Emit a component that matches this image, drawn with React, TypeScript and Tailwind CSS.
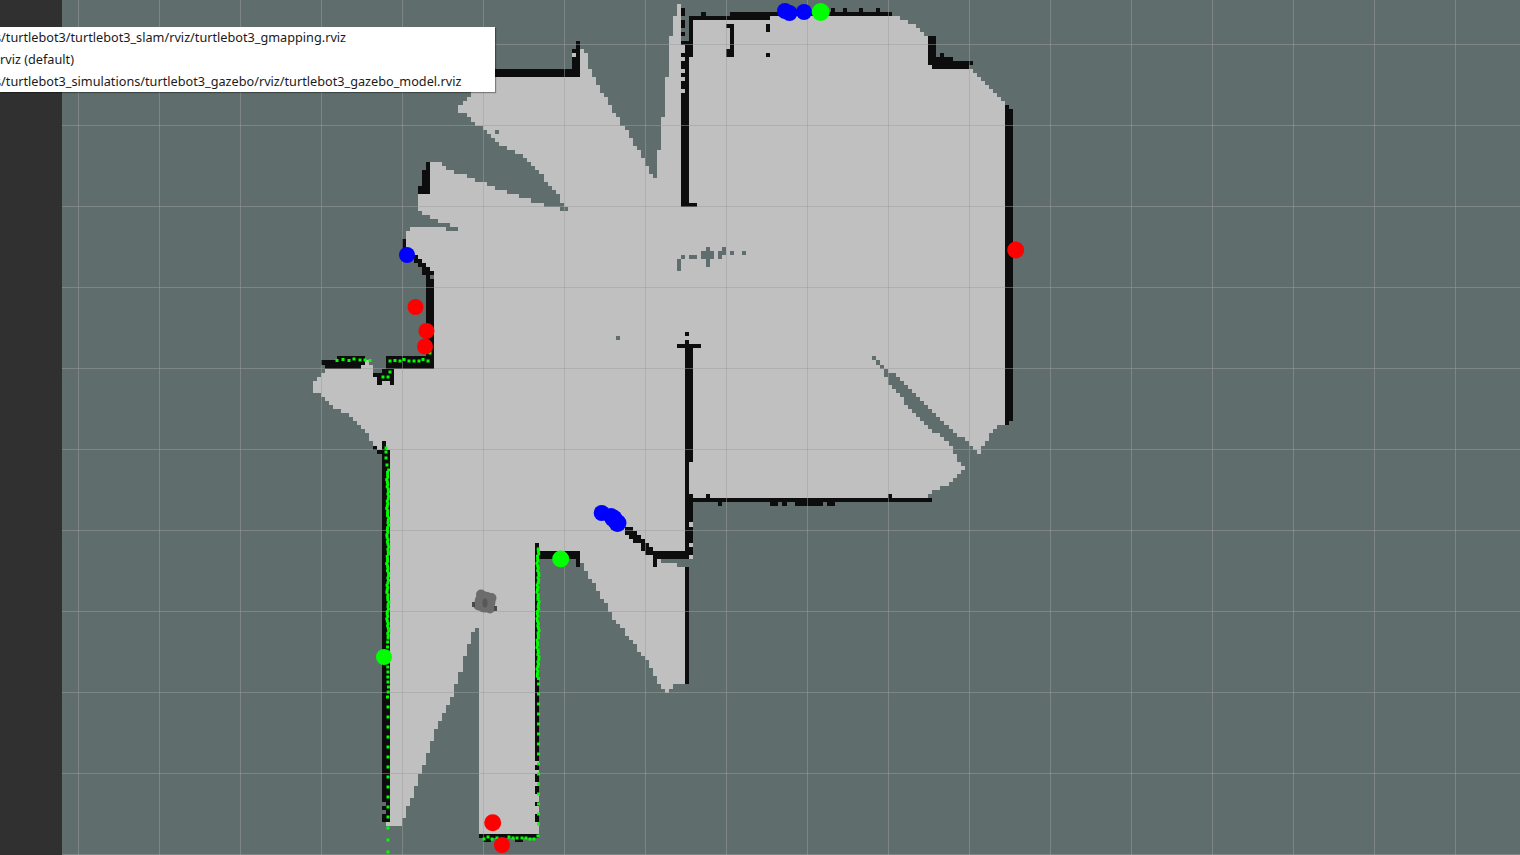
type Rect = [number, number, number, number];

const CELL = 4.05;
const OX = 0.8;
const snapX = (v: number) => Math.round((v - OX) / CELL) * CELL + OX;
const snapY = (v: number) => Math.round(v / CELL) * CELL;

// free space outline, clockwise from the spike at the top
const outline: [number, number][] = [
  [677, 4], [681, 4], [681, 41], [689, 41], [689, 16], [892, 16], [903, 20], [912, 24], [920, 32], [928, 37],
  [928, 65], [968, 69], [1005, 105], [1005, 425], [1001, 425], [997, 429], [989, 437], [985, 445], [981, 450],
  [981, 454], [977, 454], [973, 445], [968, 441], [957, 432], [943, 420], [920, 397], [916, 393], [912, 389],
  [908, 385], [904, 381], [900, 377], [896, 372], [888, 368], [884, 364], [880, 360], [876, 356], [872, 356],
  [872, 360], [876, 364], [880, 368], [884, 372], [888, 385], [920, 420], [948, 445], [953, 452], [962, 465],
  [965, 468], [962, 472], [953, 480], [943, 485], [932, 495], [928, 498], [693, 498], [693, 559], [661, 559],
  [661, 563], [677, 563], [677, 567], [689, 567], [689, 684], [682, 684], [673, 688], [665, 692], [662, 685],
  [645, 655], [617, 620], [593, 580], [583, 567], [580, 555], [540, 555], [540, 835], [479, 835], [479, 628],
  [475, 628], [467, 652], [455, 692], [442, 717], [430, 748], [418, 782], [406, 813], [402, 825], [393, 825],
  [387, 822], [387, 450], [378, 447], [374, 440], [365, 430], [353, 417], [341, 410], [329, 405], [325, 397],
  [321, 393], [313, 392], [313, 380], [317, 377], [321, 373], [325, 368], [361, 368], [361, 364], [366, 364],
  [366, 360], [370, 360], [370, 364], [374, 364], [374, 373], [386, 373],
  [386, 368], [434, 368], [434, 280], [430, 270], [406, 246], [406, 232], [410, 228], [447, 228], [447, 232],
  [459, 232], [459, 228], [447, 222], [430, 215], [422, 211], [418, 207], [418, 195], [430, 162], [438, 162],
  [442, 166], [458, 173], [478, 182], [510, 193], [523, 198], [548, 206], [560, 207], [560, 211], [568, 211],
  [568, 207], [563, 203], [556, 190], [548, 182], [540, 170], [527, 158], [515, 150], [503, 145], [490, 133],
  [482, 125], [475, 120], [467, 113], [459, 109], [459, 105], [463, 103], [467, 97], [472, 93], [472, 80],
  [496, 76], [578, 73], [578, 49], [583, 50], [592, 78], [617, 118], [637, 150], [645, 165], [653, 178],
  [657, 178], [657, 150], [661, 150], [661, 118], [665, 118], [665, 77], [669, 77], [669, 37], [673, 37],
  [673, 16], [677, 16],
];

const walls: Rect[] = [
  // top room
  [681, 8, 4, 8], [681, 20, 4, 8], [681, 33, 4, 4], [681, 41, 12, 4], [689, 16, 4, 41], [685, 45, 8, 12], [681, 53, 12, 4],
  [685, 57, 4, 150], [681, 61, 4, 8], [681, 73, 4, 4], [681, 81, 4, 8], [681, 93, 8, 114], [681, 203, 16, 4],
  [689, 16, 81, 4], [730, 12, 40, 8], [702, 12, 4, 4], [770, 12, 122, 4], [831, 8, 4, 4], [843, 8, 4, 4], [859, 8, 4, 4], [877, 8, 4, 4],
  [726, 24, 8, 4], [730, 24, 4, 33], [726, 49, 8, 8], [766, 24, 4, 9], [766, 53, 4, 4],
  [928, 37, 8, 28], [936, 57, 17, 8], [940, 53, 4, 4], [932, 61, 36, 8], [968, 61, 4, 4],
  [1005, 105, 4, 320], [1009, 109, 4, 312],
  // middle partition and lower wall
  [685, 332, 4, 4], [685, 340, 4, 4], [677, 344, 25, 4], [685, 348, 8, 114], [685, 462, 4, 32], [685, 494, 8, 61],
  [693, 498, 239, 4], [706, 494, 4, 4], [888, 494, 4, 4], [718, 502, 4, 4], [770, 502, 8, 4], [782, 502, 4, 4], [795, 502, 11, 4], [808, 502, 15, 4], [827, 502, 8, 4],
  // diagonal by the door
  [625, 526, 8, 4], [625, 530, 12, 5], [629, 535, 12, 4], [633, 539, 12, 4], [641, 543, 8, 8], [645, 547, 8, 8], [653, 551, 36, 8], [653, 555, 4, 12], [685, 567, 4, 117],
  [536, 544, 4, 187], [536, 731, 4, 29], [536, 765, 4, 3], [536, 773, 4, 9], [536, 787, 4, 6], [536, 802, 4, 4], [536, 814, 4, 8],
  [540, 551, 40, 8], [576, 555, 4, 12],
  // bottom of the corridor
  [479, 834, 61, 4], [483, 838, 8, 4], [515, 838, 8, 4],
  // left wall
  [382, 441, 4, 9], [374, 445, 4, 4], [378, 450, 12, 4], [382, 450, 8, 352], [386, 802, 4, 8], [382, 806, 8, 4], [386, 810, 4, 4], [382, 814, 8, 8],
  // left stubs
  [337, 356, 29, 4], [325, 360, 41, 4], [325, 364, 36, 4], [321, 360, 4, 4], [386, 356, 48, 12], [374, 373, 20, 4], [382, 369, 12, 4], [378, 377, 16, 4], [378, 381, 4, 4], [390, 381, 4, 4],
  [426, 279, 8, 89], [426, 275, 4, 4], [422, 271, 12, 4], [422, 267, 8, 4], [418, 263, 8, 4], [414, 259, 8, 4], [410, 255, 8, 4], [402, 239, 4, 14],
  // upper left
  [426, 162, 4, 8], [422, 170, 8, 16], [418, 186, 12, 8],
  [496, 69, 81, 8], [572, 49, 8, 28], [576, 41, 4, 8],
];

const holes: Rect[] = [[689, 522, 4, 4], [689, 543, 4, 4], [572, 53, 4, 4]];

const specks: Rect[] = [
  [677, 259, 4, 12], [681, 255, 4, 4], [689, 255, 8, 4], [702, 251, 12, 8], [706, 247, 4, 20], [718, 251, 4, 8], [722, 247, 4, 8],
  [730, 251, 4, 4], [742, 251, 4, 4], [618, 336, 4, 4], [495, 130, 4, 4],
];

const rectPath = ([x, y, w, h]: Rect) => {
  const x0 = snapX(x), y0 = snapY(y), x1 = snapX(x + w), y1 = snapY(y + h);
  return `M${x0} ${y0}H${x1}V${y1}H${x0}Z`;
};

// turns the slanted edges of the outline into map cells
const stairPath = (pts: [number, number][]) => {
  const snapped = pts.map(([x, y]) => [snapX(x), snapY(y)]);
  let d = `M${snapped[0][0]} ${snapped[0][1]}`;
  snapped.forEach((p, i) => {
    const q = snapped[(i + 1) % snapped.length];
    const dx = q[0] - p[0], dy = q[1] - p[1];
    const n = Math.max(1, Math.round(Math.max(Math.abs(dx), Math.abs(dy)) / CELL));
    if (dx === 0 || dy === 0) {
      d += `L${q[0]} ${q[1]}`;
      return;
    }
    for (let k = 1; k <= n; k++) {
      d += `H${snapX(p[0] + (dx * k) / n)}V${snapY(p[1] + (dy * k) / n)}`;
    }
  });
  return d + "Z";
};

const scan: [number, number][] = [
  [337, 360.5], [343, 359.5], [349, 360.5], [354, 359], [360, 360], [365, 360], [370, 360.5],
  [390, 361], [395, 360.5], [400, 361], [404, 359.5], [409, 361], [414, 361], [419, 361], [423, 359.5], [428, 361], [430, 353],
  [390, 372], [383, 377], [388, 377], [386, 448], [386, 452], [386, 458], [387, 465],
  [388, 828], [388, 840], [388, 852],
  [484, 839], [488, 837], [492, 839], [497, 838], [509, 837], [513, 838], [517, 838], [522, 838], [526, 838], [530, 839], [534, 839], [538, 836],
];
const wobble = (y: number) => Math.sin(y * 0.9) * 0.5 + Math.sin(y * 0.23 + 1) * 0.6;
for (let y = 470; y < 640; y += 2.4) scan.push([387.8 + wobble(y), y]);
for (let y = 642; y < 700; y += 5) scan.push([388 + wobble(y) * 0.5, y]);
for (let y = 707; y < 822; y += 10) scan.push([388, y]);
for (let y = 549; y < 680; y += 2.4) scan.push([538 + wobble(y), y]);
for (let y = 684; y < 830; y += 10) scan.push([538.5, y]);

const blobs: [number, number, number, string][] = [
  [407, 255, 8, "#0000ff"], [601.7, 513, 8, "#0000ff"], [611, 516, 8, "#0000ff"], [613.5, 518.5, 9, "#0000ff"], [617.5, 523, 9, "#0000ff"],
  [785, 11, 8, "#0000ff"], [789.5, 13, 8, "#0000ff"], [804, 12, 8, "#0000ff"], [820.7, 12, 9, "#00ff00"],
  [1015.7, 250, 8.5, "#ff0000"], [415.5, 307, 8, "#ff0000"], [426.5, 331, 8, "#ff0000"], [425, 346.5, 8, "#ff0000"],
  [384, 657, 8, "#00ff00"], [560.7, 559, 8.5, "#00ff00"], [492.7, 822.7, 8.5, "#ff0000"], [502, 845, 8, "#ff0000"],
];

const gridX = Array.from({ length: 18 }, (_, i) => 78.5 + i * 81);
const gridY = Array.from({ length: 11 }, (_, i) => 44.5 + i * 81);

function MapView() {
  return (
    <svg viewBox="62 0 1458 855" className="block h-full w-full">
      <g shapeRendering="crispEdges">
        <path d={stairPath(outline)} fill="#c0c0c0" />
        <path d={specks.map(rectPath).join("")} fill="#5f6d6c" />
        <path d={walls.map(rectPath).join("")} fill="#0d0d0d" />
        <path d={holes.map(rectPath).join("")} fill="#c0c0c0" />
        {gridX.map((x) => (
          <line key={x} x1={x} x2={x} y1={0} y2={855} stroke="#9b9d9d" strokeOpacity={0.5} />
        ))}
        {gridY.map((y) => (
          <line key={y} x1={62} x2={1520} y1={y} y2={y} stroke="#9b9d9d" strokeOpacity={0.5} />
        ))}
      </g>
      <g fill="#6c6c6c">
        <circle cx={481} cy={594.5} r={5} />
        <circle cx={491.5} cy={598} r={5} />
        <circle cx={490} cy={608.5} r={5} />
        <circle cx={478.5} cy={605.5} r={5} />
        <circle cx={485} cy={602} r={10.5} />
        <rect x={472} y={602} width={3} height={5} fill="#4a4a4a" />
        <rect x={494} y={606} width={3} height={5} fill="#4a4a4a" />
        <ellipse cx={485} cy={603} rx={2.5} ry={4.5} fill="#585858" />
      </g>
      {scan.map(([x, y], i) => (
        <rect key={i} x={x - 1.5} y={y - 1.5} width={3} height={3} fill="#00ff00" />
      ))}
      {blobs.map(([x, y, r, c], i) => (
        <circle key={i} cx={x} cy={y} r={r} fill={c} />
      ))}
    </svg>
  );
}

const recent = [
  "s/turtlebot3/turtlebot3_slam/rviz/turtlebot3_gmapping.rviz",
  "rviz (default)",
  "s/turtlebot3_simulations/turtlebot3_gazebo/rviz/turtlebot3_gazebo_model.rviz",
];

export default function App() {
  return (
    <div className="relative flex h-[855px] w-[1520px] overflow-hidden bg-[#5f6d6c]">
      <div className="w-[62px] shrink-0 bg-[#303030]" />
      <div className="flex-1">
        <MapView />
      </div>
      <div className="absolute left-0 top-[27px] flex h-[65px] w-[495px] flex-col overflow-hidden bg-white font-['Noto_Sans',sans-serif] text-[12.7px] text-[#1a1a1a] shadow-[1px_1px_1px_rgba(0,0,0,0.35)]">
        {recent.map((label) => (
          <div key={label} className={label.startsWith("s/") ? "-ml-[5px] flex h-[22px] shrink-0 items-center whitespace-nowrap" : "flex h-[22px] shrink-0 items-center whitespace-nowrap"}>
            {label}
          </div>
        ))}
      </div>
    </div>
  );
}
